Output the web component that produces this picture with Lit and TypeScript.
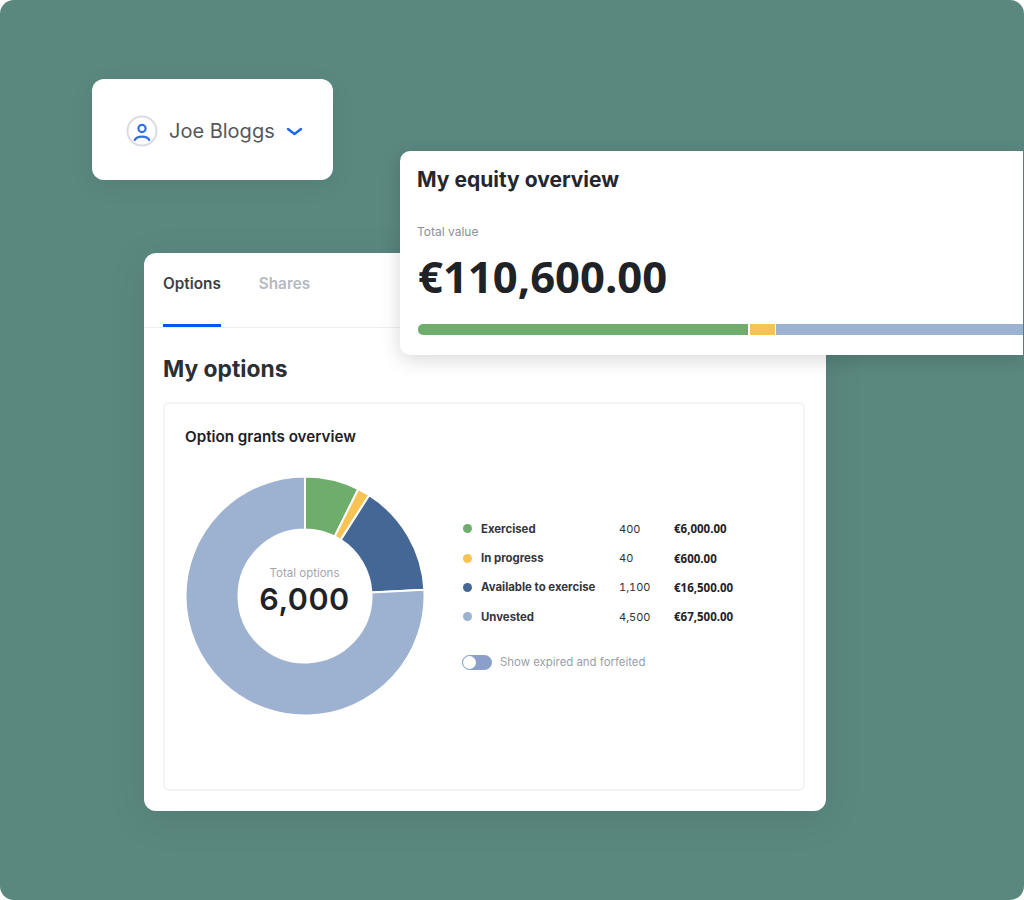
import { LitElement, html, css, svg } from "lit";
import { customElement } from "lit/decorators.js";

const CX = 120, CY = 120, RO = 119.5, RI = 66.5;
const SEGMENTS = [
  { from: 0, to: 26.5, color: "#6fad6c" },
  { from: 26.5, to: 32.5, color: "#f7c354" },
  { from: 32.5, to: 87, color: "#456796" },
  { from: 87, to: 360, color: "#9db2d0" },
];
const pt = (r: number, a: number) => {
  const t = (a * Math.PI) / 180;
  return `${(CX + r * Math.sin(t)).toFixed(2)} ${(CY - r * Math.cos(t)).toFixed(2)}`;
};
const arc = (from: number, to: number) => {
  const large = to - from > 180 ? 1 : 0;
  return `M${pt(RO, from)}A${RO} ${RO} 0 ${large} 1 ${pt(RO, to)}L${pt(RI, to)}A${RI} ${RI} 0 ${large} 0 ${pt(RI, from)}Z`;
};
const LEGEND = [
  { name: "Exercised", qty: "400", value: "€6,000.00", color: "#6fad6c" },
  { name: "In progress", qty: "40", value: "€600.00", color: "#f7c354" },
  { name: "Available to exercise", qty: "1,100", value: "€16,500.00", color: "#456796" },
  { name: "Unvested", qty: "4,500", value: "€67,500.00", color: "#9db2d0" },
];

@customElement("app-root")
export class AppRoot extends LitElement {
  static styles = css`
    :host { display: block; width: 1024px; height: 900px; background: #fff; font-family: Inter, "Liberation Sans", sans-serif; color: #22262b; }
    * { box-sizing: border-box; }
    .canvas { position: relative; width: 1024px; height: 900px; background: #5a887f; border-radius: 14px; overflow: hidden; }
    .panel { position: absolute; background: #fff; }

    .user { left: 92px; top: 79px; width: 241px; height: 101px; border-radius: 12px; display: flex; align-items: center; padding: 3px 0 0 34px; box-shadow: 0 6px 24px rgba(0,0,0,.07); }
    .user svg.avatar { width: 32px; height: 32px; flex: none; }
    .user .name { margin-left: 11px; font-size: 20px; line-height: 24px; color: #55585c; }
    .user svg.chev { margin-left: 11px; width: 17px; height: 9px; flex: none; }

    .options { left: 144px; top: 253px; width: 682px; height: 558px; border-radius: 12px; box-shadow: 0 8px 40px rgba(0,0,0,.09); }
    .tabs { display: flex; gap: 38px; height: 75px; padding-left: 19px; border-bottom: 1px solid #ebedef; }
    .tab { height: 74px; padding-top: 21px; font-size: 15.3px; line-height: 20px; font-weight: 600; color: #b6b9c0; }
    .tab.active { color: #3c4046; border-bottom: 3px solid #0b55ee; }
    .body { padding: 25px 21px 0 19px; }
    h2 { margin: 0; font-size: 22.8px; line-height: 32px; font-weight: 700; color: #2b2f34; }
    .grants { margin-top: 17px; height: 389px; border: 2px solid #f3f3f6; border-radius: 6px; padding: 21px 20px 0 20px; }
    h3 { margin: 0; font-size: 15.2px; line-height: 23px; font-weight: 600; color: #1d2024; }
    .row { display: flex; align-items: flex-start; margin-top: 28px; margin-left: -0.5px; }
    .donut { position: relative; width: 240px; height: 240px; flex: none; }
    .donut svg { display: block; width: 240px; height: 240px; }
    .center { position: absolute; inset: 0; display: flex; flex-direction: column; align-items: center; justify-content: center; padding-bottom: 10px; }
    .center .label { font-size: 11.5px; line-height: 15px; color: #a3a6ad; }
    .center .num { font-size: 30.5px; line-height: 36px; font-weight: 600; color: #1f2226; letter-spacing: .5px; }

    .side { margin-left: 38.5px; padding-top: 38px; }
    .legend { display: grid; grid-template-columns: 156px 55px auto; grid-auto-rows: 29.4px; align-items: center; }
    .lname { display: flex; align-items: center; gap: 9px; font-size: 11.4px; font-weight: 700; color: #33363b; }
    .dot { width: 9px; height: 9px; border-radius: 50%; flex: none; }
    .qty { font-size: 11px; font-variant-numeric: tabular-nums; color: #2f3237; }
    .amt { font-family: "Open Sans", Inter, sans-serif; font-size: 11.5px; font-weight: 700; color: #1f2226; }
    .toggle-row { display: flex; align-items: center; gap: 8px; margin-top: 23px; margin-left: -1px; }
    .toggle { width: 30px; height: 15px; border-radius: 8px; background: #8b9fcb; border: 1px solid #8b9fcb; }
    .knob { width: 13px; height: 13px; border-radius: 50%; background: #fff; }
    .toggle-label { font-size: 11.4px; color: #9a9ea6; }

    .equity { left: 400px; top: 151px; width: 623px; height: 204px; border-radius: 10px 0 0 10px; padding: 16px 0 0 17px; box-shadow: 0 4px 20px rgba(0,0,0,.16); }
    h1 { margin: 0; font-size: 21px; line-height: 26px; font-weight: 700; color: #24282e; }
    .total { margin-top: 30px; font-size: 12px; line-height: 18px; color: #8c9098; }
    .amount { margin-top: 7px; font-family: "Open Sans", sans-serif; font-size: 43.6px; line-height: 56px; font-weight: 700; color: #1f2226; padding-left: 1px; }
    .bar { display: flex; gap: 1.5px; height: 11px; margin-top: 20px; margin-left: 1px; border-radius: 5px 0 0 5px; overflow: hidden; }
    .bar i { display: block; height: 100%; }
  `;

  render() {
    return html`
      <div class="canvas">
        <section class="panel user">
          <svg class="avatar" viewBox="0 0 32 32" fill="none">
            <circle cx="16" cy="16" r="14.5" stroke="#d9dce3" stroke-width="2"></circle>
            <circle cx="16" cy="13.500" r="3.600" stroke="#2f6fe8" stroke-width="2.200"></circle>
            <path d="M8.800 25c1-2.200 3.800-3.400 7.200-3.400s6.200 1.200 7.200 3.400" stroke="#2f6fe8" stroke-width="2.200" stroke-linecap="round"></path>
          </svg>
          <span class="name">Joe Bloggs</span>
          <svg class="chev" viewBox="0 0 17 9" fill="none">
            <path d="M2 2l6.500 5L15 2" stroke="#1f66ee" stroke-width="2.400" stroke-linecap="round" stroke-linejoin="round"></path>
          </svg>
        </section>

        <section class="panel options">
          <div class="tabs">
            <div class="tab active">Options</div>
            <div class="tab">Shares</div>
          </div>
          <div class="body">
            <h2>My options</h2>
            <div class="grants">
              <h3>Option grants overview</h3>
              <div class="row">
                <div class="donut">
                  <svg viewBox="0 0 240 240">
                    ${SEGMENTS.map(
                      (s) => svg`<path d=${arc(s.from, s.to === 360 ? 359.999 : s.to)} fill=${s.color} stroke="#fff" stroke-width="2" stroke-linejoin="round"></path>`
                    )}
                  </svg>
                  <div class="center">
                    <div class="label">Total options</div>
                    <div class="num">6,000</div>
                  </div>
                </div>
                <div class="side">
                  <div class="legend">
                    ${LEGEND.map(
                      (l) => html`
                        <div class="lname"><span class="dot" style="background:${l.color}"></span>${l.name}</div>
                        <div class="qty">${l.qty}</div>
                        <div class="amt">${l.value}</div>
                      `
                    )}
                  </div>
                  <div class="toggle-row">
                    <div class="toggle"><div class="knob"></div></div>
                    <span class="toggle-label">Show expired and forfeited</span>
                  </div>
                </div>
              </div>
            </div>
          </div>
        </section>

        <section class="panel equity">
          <h1>My equity overview</h1>
          <div class="total">Total value</div>
          <div class="amount">€110,600.00</div>
          <div class="bar">
            <i style="width:330px;background:#6fad6c"></i>
            <i style="width:25px;background:#f7c354"></i>
            <i style="flex:1;background:#9db2d0"></i>
          </div>
        </section>
      </div>
    `;
  }
}
